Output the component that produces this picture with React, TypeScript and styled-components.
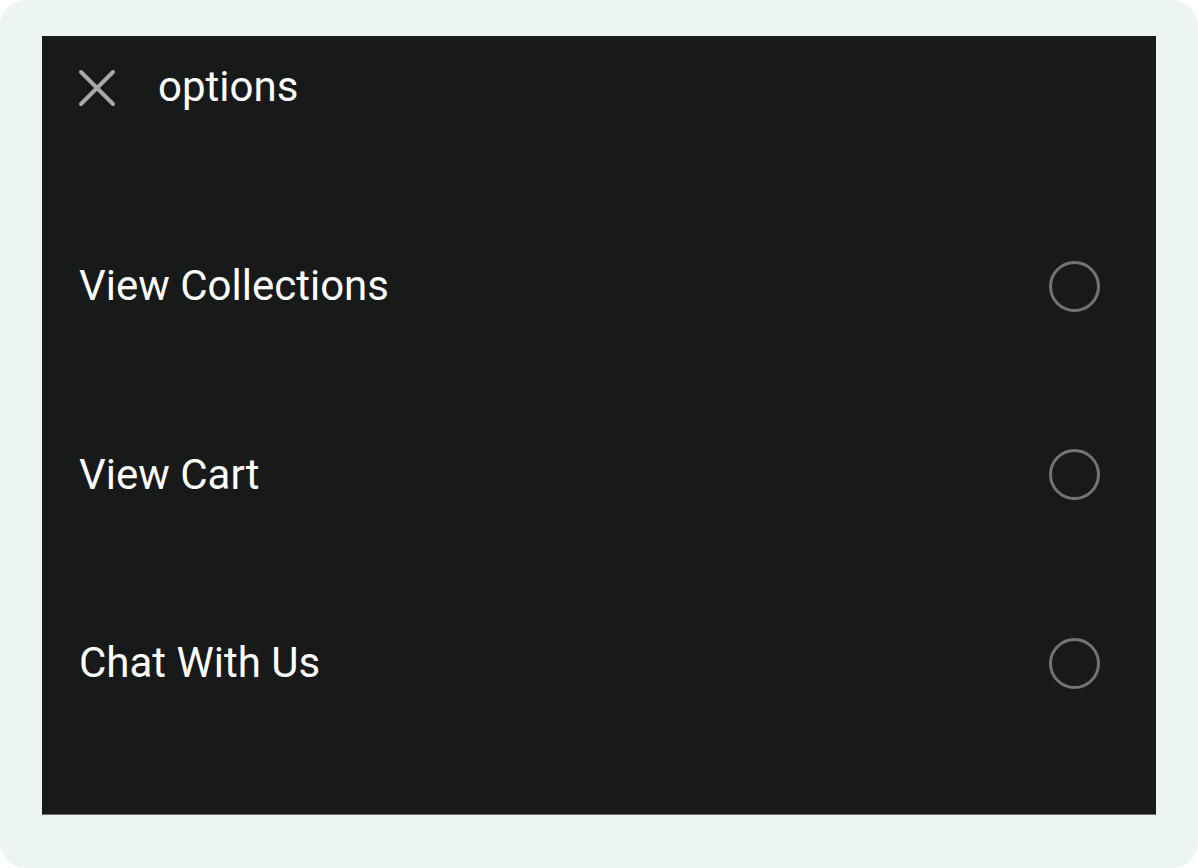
import React from "react";
import styled, { createGlobalStyle } from "styled-components";

const Global = createGlobalStyle`
  html, body { margin: 0; padding: 0; background: #ffffff; }
  body { font-family: Roboto, "Noto Sans", Arial, sans-serif; }
  * { box-sizing: border-box; }
`;

const Frame = styled.div`
  width: 1198px;
  height: 868px;
  background: #edf5f2;
  border-radius: 26px;
  padding: 36px 42px 53px 42px;
  display: flex;
`;

const Panel = styled.div`
  flex: 1;
  background: #181919;
  border-bottom: 1px solid #6a6e6c;
  display: flex;
  flex-direction: column;
`;

const Header = styled.div`
  height: 104px;
  display: flex;
  align-items: center;
  padding-left: 36px;
  gap: 42px;
`;

const CloseButton = styled.button`
  width: 38px;
  height: 38px;
  padding: 0;
  border: none;
  background: transparent;
  display: flex;
  align-items: center;
  justify-content: center;
  cursor: pointer;
`;

const Title = styled.div`
  color: #ffffff;
  font-size: 42px;
  font-weight: 400;
  line-height: 1;
  margin-top: -2px;
`;

const List = styled.div`
  padding-top: 52px;
  display: flex;
  flex-direction: column;
`;

const Row = styled.label`
  height: 188.5px;
  display: flex;
  align-items: center;
  justify-content: space-between;
  padding: 0 56px 0 37px;
  cursor: pointer;
`;

const Label = styled.span`
  color: #ffffff;
  font-size: 42px;
  font-weight: 400;
  line-height: 1;
`;

const Radio = styled.span`
  width: 51px;
  height: 51px;
  border-radius: 50%;
  border: 3px solid #737373;
  display: inline-block;
`;

const items = ["View Collections", "View Cart", "Chat With Us"];

export default function App() {
  return (
    <>
      <Global />
      <Frame>
        <Panel>
          <Header>
            <CloseButton aria-label="close">
              <svg width="38" height="38" viewBox="0 0 38 38">
                <path
                  d="M3 3 L35 35 M35 3 L3 35"
                  stroke="#a8a8a8"
                  strokeWidth="4"
                  strokeLinecap="round"
                />
              </svg>
            </CloseButton>
            <Title>options</Title>
          </Header>
          <List>
            {items.map((t) => (
              <Row key={t}>
                <Label>{t}</Label>
                <Radio />
              </Row>
            ))}
          </List>
        </Panel>
      </Frame>
    </>
  );
}
